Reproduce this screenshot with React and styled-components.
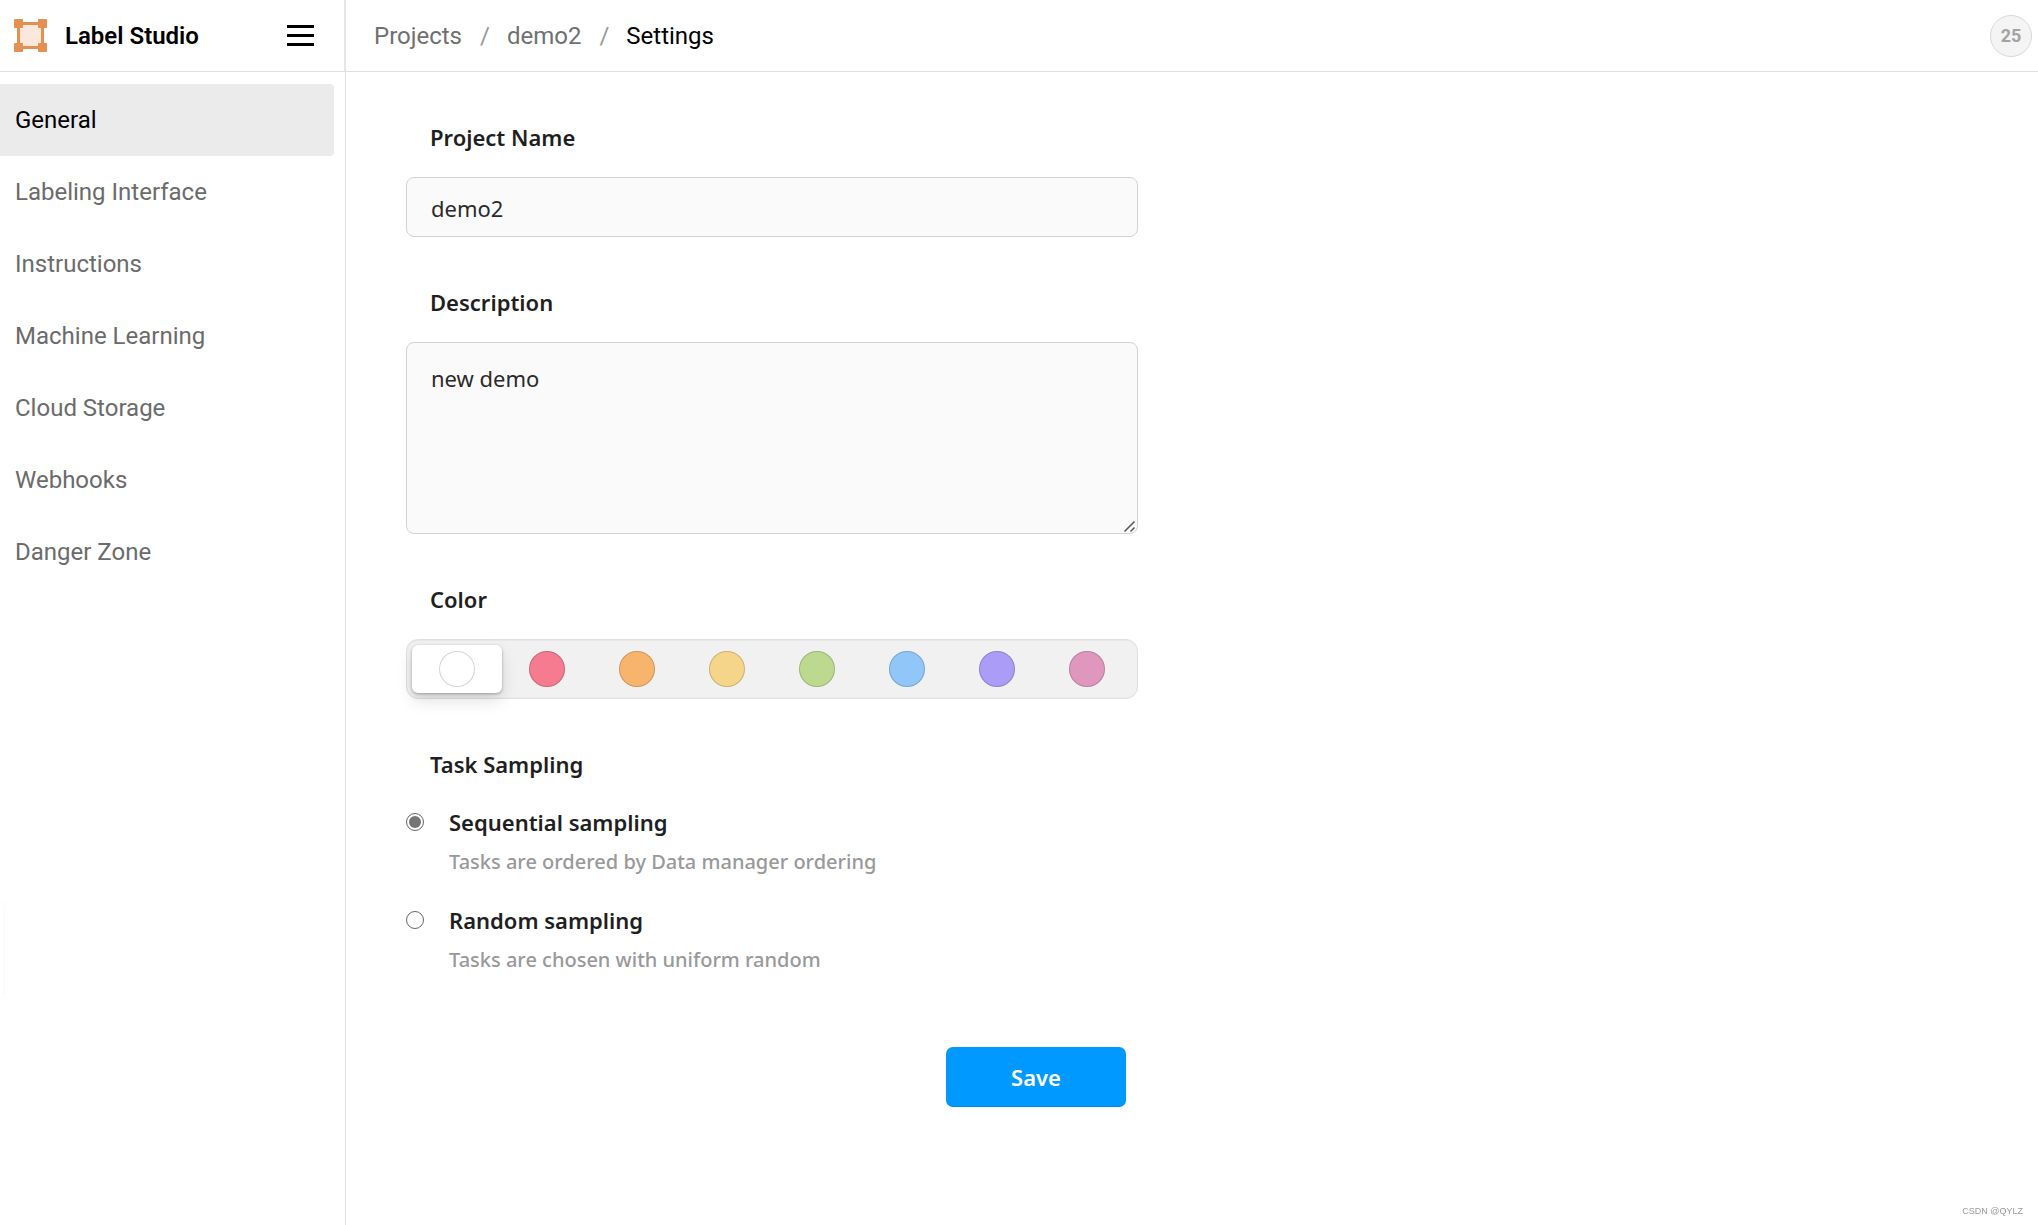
import React, { useState } from "react";
import styled, { createGlobalStyle } from "styled-components";

const GlobalStyle = createGlobalStyle`
  *, *::before, *::after { box-sizing: border-box; }
  body {
    margin: 0;
    background: #fff;
    color: #1f1f1f;
    font-family: "Noto Sans", "Open Sans", sans-serif;
    font-size: 22px;
    line-height: 36px;
  }
`;

const Page = styled.div`
  display: grid;
  grid-template-columns: 346px minmax(0, 1fr);
  grid-template-rows: 72px 1fr;
  min-height: 100vh;
`;

const Brand = styled.div`
  display: flex;
  align-items: center;
  justify-content: space-between;
  padding: 0 30px 0 14px;
  border-right: 2px solid #e6e6e6;
  border-bottom: 1px solid #e0e0e0;
`;

const BrandLink = styled.a`
  display: flex;
  align-items: center;
  gap: 18px;
  color: #000;
  font-family: Roboto, sans-serif;
  font-size: 24px;
  font-weight: 600;
  text-decoration: none;
`;

const MenuButton = styled.button`
  display: flex;
  flex-direction: column;
  gap: 6px;
  padding: 0;
  border: 0;
  background: none;
  cursor: pointer;
`;

const MenuBar = styled.span`
  width: 27px;
  height: 3px;
  background: #000;
`;

const TopBar = styled.header`
  display: flex;
  align-items: center;
  justify-content: space-between;
  padding: 0 6px 0 28px;
  border-bottom: 1px solid #e0e0e0;
  font-family: Roboto, sans-serif;
  font-size: 24px;
`;

const Crumbs = styled.ol`
  display: flex;
  gap: 17px;
  margin: 0;
  padding: 0;
  list-style: none;
`;

const Crumb = styled.li`
  display: flex;
  gap: 18px;
  color: #000;

  &:not(:last-child)::after {
    content: "/";
    color: #999;
  }
`;

const CrumbLink = styled.a`
  color: #707070;
  text-decoration: none;
`;

const UserBadge = styled.button`
  width: 42px;
  height: 42px;
  padding: 0;
  border: 1px solid #d9d9d9;
  border-radius: 50%;
  background: #f4f4f4;
  color: #a3a3a3;
  font-family: Roboto, sans-serif;
  font-size: 18px;
  font-weight: 700;
`;

const Sidebar = styled.nav`
  display: flex;
  flex-direction: column;
  padding: 12px 11px 12px 0;
  border-right: 1px solid #e0e0e0;
`;

const NavLink = styled.a`
  display: flex;
  align-items: center;
  height: 72px;
  padding: 0 15px;
  border-radius: 0 4px 4px 0;
  background: ${(p) => (p.$active ? "#ebebeb" : "transparent")};
  color: ${(p) => (p.$active ? "#000" : "#6b6b6b")};
  font-family: Roboto, sans-serif;
  font-size: 24px;
  text-decoration: none;
`;

const Main = styled.main`
  padding: 0 60px 60px;
`;

const Form = styled.form`
  display: flex;
  flex-direction: column;
  max-width: 732px;
`;

const Field = styled.div`
  display: flex;
  flex-direction: column;
  gap: 22px;
  padding-top: 47px;
`;

const FieldSet = styled.fieldset`
  min-width: 0;
  margin: 0;
  padding: 47px 0 0;
  border: 0;
`;

const FieldLabel = styled.label`
  padding: 0 24px;
  font-weight: 600;
`;

const Legend = styled.legend`
  float: left;
  width: 100%;
  margin-bottom: 22px;
  padding: 0 24px;
  font-weight: 600;
`;

const TextInput = styled.input`
  width: 100%;
  height: 60px;
  padding: 1px 24px 0;
  border: 1px solid #d2d2d2;
  border-radius: 8px;
  background: #fafafa;
  color: #2b2b2b;
  font: inherit;
`;

const TextArea = styled.textarea`
  display: block;
  width: 100%;
  height: 192px;
  padding: 17px 24px;
  border: 1px solid #d2d2d2;
  border-radius: 8px;
  background: #fafafa;
  color: #2b2b2b;
  font: inherit;
  resize: vertical;

  &::-webkit-resizer {
    background: url("data:image/svg+xml,%3Csvg xmlns='http://www.w3.org/2000/svg' width='15' height='15'%3E%3Cpath d='M2.5 13.5l10-10M8.5 13.5l4-4' stroke='%23555' stroke-width='1.5'/%3E%3C/svg%3E") no-repeat right bottom;
  }
`;

const Palette = styled.div`
  clear: both;
  display: flex;
  height: 60px;
  padding: 5px;
  border: 1px solid #e0e0e0;
  border-radius: 12px;
  background: #f1f1f1;
  box-shadow: inset 0 1px 0 rgba(0, 0, 0, 0.04), inset 0 -1px 0 rgba(0, 0, 0, 0.02);
`;

const SwatchLabel = styled.label`
  display: flex;
  flex: 1;
  align-items: center;
  justify-content: center;
  border-radius: 6px;
  cursor: pointer;

  &:has(input:checked) {
    background: #fff;
    box-shadow: 0 1px 3px rgba(0, 0, 0, 0.3), 0 8px 16px rgba(0, 0, 0, 0.12);
  }
`;

const Swatch = styled.input`
  appearance: none;
  width: 36px;
  height: 36px;
  margin: 0;
  border-radius: 50%;
  background: ${(p) => p.$color};
  box-shadow: inset 0 0 0 1px rgba(0, 0, 0, 0.17);
  cursor: pointer;
`;

const Options = styled.div`
  clear: both;
  display: flex;
  flex-direction: column;
  gap: 22px;
`;

const Option = styled.div`
  display: grid;
  grid-template-columns: 18px 1fr;
  column-gap: 25px;
  row-gap: 4px;
  align-items: center;
`;

const Radio = styled.input`
  appearance: none;
  display: grid;
  place-items: center;
  width: 18px;
  height: 18px;
  margin: 0;
  border: 1px solid #666;
  border-radius: 50%;
  background: #fff;

  &:checked::before {
    content: "";
    width: 12px;
    height: 12px;
    border-radius: 50%;
    background: #757575;
  }
`;

const OptionLabel = styled.label`
  font-weight: 600;
`;

const Hint = styled.p`
  grid-column: 2;
  margin: 0;
  color: #999;
  font-size: 20px;
  font-weight: 500;
`;

const Actions = styled.div`
  display: flex;
  justify-content: flex-end;
  padding: 69px 12px 0;
`;

const SaveButton = styled.button`
  width: 180px;
  height: 60px;
  padding: 0;
  border: 0;
  border-radius: 7px;
  background: #0099ff;
  box-shadow: inset 0 -1px 0 rgba(0, 0, 0, 0.1);
  color: #fff;
  font: inherit;
  font-weight: 600;
  cursor: pointer;
`;

const EdgeHandle = styled.div`
  position: fixed;
  left: 0;
  top: 904px;
  width: 3px;
  height: 92px;
  background: #fff;
  box-shadow: 0 0 6px rgba(0, 0, 0, 0.06);
`;

const Watermark = styled.div`
  position: fixed;
  right: 15px;
  bottom: 8px;
  color: #999;
  font-family: "Liberation Sans", Arial, sans-serif;
  font-size: 9px;
  line-height: 12px;
`;

const sections = [
  "General",
  "Labeling Interface",
  "Instructions",
  "Machine Learning",
  "Cloud Storage",
  "Webhooks",
  "Danger Zone",
];

const colors = [
  { name: "White", value: "#ffffff" },
  { name: "Red", value: "#f67a90" },
  { name: "Orange", value: "#f8b46d" },
  { name: "Yellow", value: "#f4d58a" },
  { name: "Green", value: "#bdd990" },
  { name: "Blue", value: "#91c6f9" },
  { name: "Violet", value: "#ab9cf8" },
  { name: "Pink", value: "#e097bd" },
];

const samplings = [
  { id: "sequential", label: "Sequential sampling", hint: "Tasks are ordered by Data manager ordering" },
  { id: "random", label: "Random sampling", hint: "Tasks are chosen with uniform random" },
];

function Logo() {
  return (
    <svg width="33" height="33" viewBox="0 0 33 33" aria-hidden="true">
      <rect x="4.5" y="4.5" width="24" height="24" fill="#fbe8dd" stroke="#e58f50" strokeWidth="3" />
      <g fill="#e58f50">
        <rect width="9" height="9" rx="1" />
        <rect x="24" width="9" height="9" rx="1" />
        <rect y="24" width="9" height="9" rx="1" />
        <rect x="24" y="24" width="9" height="9" rx="1" />
      </g>
    </svg>
  );
}

export default function App() {
  const [name, setName] = useState("demo2");
  const [description, setDescription] = useState("new demo");
  const [color, setColor] = useState("White");
  const [sampling, setSampling] = useState("sequential");

  return (
    <>
      <GlobalStyle />
      <Page>
        <Brand>
          <BrandLink href="#home">
            <Logo />
            Label Studio
          </BrandLink>
          <MenuButton type="button" aria-label="Menu">
            <MenuBar />
            <MenuBar />
            <MenuBar />
          </MenuButton>
        </Brand>
        <TopBar>
          <Crumbs>
            <Crumb><CrumbLink href="#projects">Projects</CrumbLink></Crumb>
            <Crumb><CrumbLink href="#demo2">demo2</CrumbLink></Crumb>
            <Crumb aria-current="page">Settings</Crumb>
          </Crumbs>
          <UserBadge type="button">25</UserBadge>
        </TopBar>
        <Sidebar>
          {sections.map((section, i) => (
            <NavLink key={section} href="#settings" $active={i === 0}>{section}</NavLink>
          ))}
        </Sidebar>
        <Main>
          <Form onSubmit={(e) => e.preventDefault()}>
            <Field>
              <FieldLabel htmlFor="name">Project Name</FieldLabel>
              <TextInput id="name" value={name} onChange={(e) => setName(e.target.value)} />
            </Field>
            <Field>
              <FieldLabel htmlFor="description">Description</FieldLabel>
              <TextArea id="description" value={description} onChange={(e) => setDescription(e.target.value)} />
            </Field>
            <FieldSet>
              <Legend>Color</Legend>
              <Palette>
                {colors.map((c) => (
                  <SwatchLabel key={c.name}>
                    <Swatch
                      type="radio"
                      name="color"
                      aria-label={c.name}
                      $color={c.value}
                      checked={color === c.name}
                      onChange={() => setColor(c.name)}
                    />
                  </SwatchLabel>
                ))}
              </Palette>
            </FieldSet>
            <FieldSet>
              <Legend>Task Sampling</Legend>
              <Options>
                {samplings.map((s) => (
                  <Option key={s.id}>
                    <Radio
                      type="radio"
                      name="sampling"
                      id={s.id}
                      checked={sampling === s.id}
                      onChange={() => setSampling(s.id)}
                    />
                    <OptionLabel htmlFor={s.id}>{s.label}</OptionLabel>
                    <Hint>{s.hint}</Hint>
                  </Option>
                ))}
              </Options>
            </FieldSet>
            <Actions>
              <SaveButton type="submit">Save</SaveButton>
            </Actions>
          </Form>
        </Main>
      </Page>
      <EdgeHandle />
      <Watermark>CSDN @QYLZ</Watermark>
    </>
  );
}
